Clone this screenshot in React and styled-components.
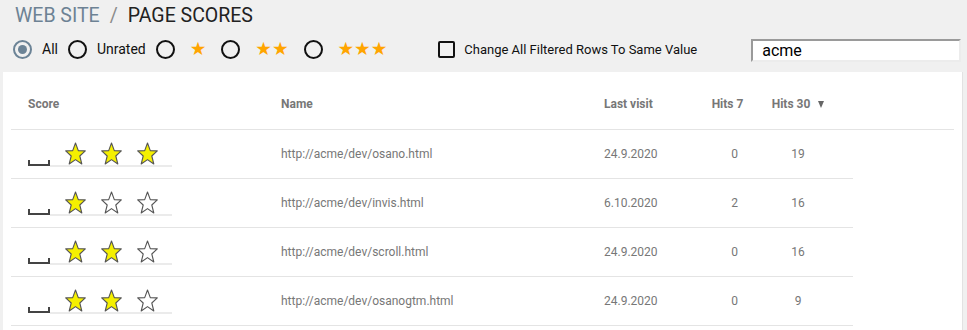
import React from 'react'
import styled, { createGlobalStyle } from 'styled-components'

const GlobalStyle = createGlobalStyle`
  html, body {
    margin: 0;
    padding: 0;
    background-color: #f0f0f0;
    font-family: Roboto, "Liberation Sans", Arial, sans-serif;
  }
`

const Page = styled.div`
  height: 100vh;
  display: flex;
  flex-direction: column;
  overflow: hidden;
`

const Title = styled.h1`
  margin: 4px 0 0 15px;
  font-size: 19.5px;
  line-height: 24px;
  font-weight: 400;
  color: #222;
`

const Crumb = styled.span`
  color: #6d8294;
`

const Slash = styled.span`
  color: #8a8a8a;
  margin: 0 10px;
`

const FilterBar = styled.div`
  display: flex;
  align-items: center;
  height: 26px;
  margin-top: 8px;
  padding-left: 13px;
  white-space: nowrap;
`

const RadioOption = styled.label`
  display: flex;
  align-items: center;
  flex-shrink: 0;
  gap: 10px;
  margin-right: 10px;
  font-size: 14px;
  color: #111;
`

const RadioCircle = styled.span`
  box-sizing: border-box;
  width: 19px;
  height: 19px;
  border-radius: 50%;
  border: 2px solid ${props => (props.$checked ? '#6b8396' : '#111')};
  display: flex;
  align-items: center;
  justify-content: center;
  &::after {
    content: '';
    width: 9px;
    height: 9px;
    border-radius: 50%;
    background-color: ${props => (props.$checked ? '#6b8396' : 'transparent')};
  }
`

const OrangeStars = styled.span`
  font-family: "DejaVu Sans", sans-serif;
  font-size: 18.5px;
  line-height: 20px;
  color: #ffa500;
  padding: 0 5px 0 5px;
`

const CheckOption = styled.label`
  display: flex;
  align-items: center;
  flex-shrink: 0;
  gap: 9px;
  margin-left: 36px;
  font-size: 13px;
  color: #111;
`

const CheckBox = styled.span`
  box-sizing: border-box;
  width: 17px;
  height: 17px;
  border: 2px solid #111;
  border-radius: 2px;
`

const SearchInput = styled.input`
  box-sizing: border-box;
  flex-shrink: 0;
  width: 210px;
  height: 23px;
  margin: 3px 0 0 54px;
  padding: 0 9px;
  border-style: solid;
  border-width: 2px;
  border-color: #9a9a9a #ececec #ececec #9a9a9a;
  background-color: #fff;
  font-family: Roboto, "Liberation Sans", Arial, sans-serif;
  font-size: 16px;
  color: #000;
  outline: none;
`

const Panel = styled.div`
  flex: 1;
  margin: 10px 0 0 3px;
  width: 960px;
  padding-left: 8px;
  box-sizing: border-box;
  background-color: #fff;
  border-right: 1px solid #e2e2e2;
`

const columns = '270px 323px 98px 65px 62px'

const HeaderRow = styled.div`
  display: grid;
  grid-template-columns: ${columns} 1fr;
  width: 943px;
  padding: 25px 0 18px;
  line-height: 14px;
  border-bottom: 1px solid #e4e4e4;
  font-size: 12px;
  font-weight: 700;
  color: #777;
`

const Row = styled.div`
  display: grid;
  grid-template-columns: ${columns} 1fr;
  align-items: center;
  width: 842px;
  height: 48px;
  border-bottom: 1px solid #e4e4e4;
  font-size: 12px;
  color: #777;
`

const Cell = styled.div`
  display: flex;
  align-items: center;
  justify-content: ${props => (props.$center ? 'center' : 'flex-start')};
  padding-left: ${props => (props.$first ? '17px' : '0')};
  white-space: nowrap;
`

const SortArrow = styled.span`
  width: 0;
  height: 0;
  margin: 1px 0 0 8px;
  border-left: 3.5px solid transparent;
  border-right: 3.5px solid transparent;
  border-top: 7px solid ${props => (props.$off ? 'transparent' : '#666')};
`

const Rating = styled.div`
  display: flex;
  align-items: flex-end;
  padding-left: 17px;
`

const ClearBox = styled.span`
  box-sizing: border-box;
  width: 22px;
  height: 6px;
  border: 2px solid #444;
  border-top: none;
  margin-bottom: 1px;
`

const StarTrack = styled.span`
  display: flex;
  align-items: flex-end;
  gap: 15px;
  padding: 0 14px 0 14.5px;
  border-bottom: 2px solid #ebebeb;
`

const StarIcon = ({ filled }) => (
  <svg width='21' height='23' viewBox='0 0 21 23'>
    <polygon
      points='10.5,1 13.3,8.6 20.3,8.9 14.8,14 16.8,22 10.5,17.6 4.2,22 6.2,14 0.7,8.9 7.7,8.6'
      fill={filled ? '#f5f000' : '#fff'}
      stroke='#555'
      strokeWidth='1.1'
      strokeLinejoin='round'
    />
  </svg>
)

const rows = [
  { score: 3, url: 'http://acme/dev/osano.html', visit: '24.9.2020', hits7: 0, hits30: 19 },
  { score: 1, url: 'http://acme/dev/invis.html', visit: '6.10.2020', hits7: 2, hits30: 16 },
  { score: 2, url: 'http://acme/dev/scroll.html', visit: '24.9.2020', hits7: 0, hits30: 16 },
  { score: 2, url: 'http://acme/dev/osanogtm.html', visit: '24.9.2020', hits7: 0, hits30: 9 }
]

const ScoreStars = ({ score }) => (
  <Rating>
    <ClearBox />
    <StarTrack>
      {[1, 2, 3].map(n => <StarIcon key={n} filled={n <= score} />)}
    </StarTrack>
  </Rating>
)

export default function App () {
  return (
    <Page>
      <GlobalStyle />
      <Title>
        <Crumb>WEB SITE</Crumb>
        <Slash>/</Slash>
        PAGE SCORES
      </Title>
      <FilterBar>
        <RadioOption><RadioCircle $checked />All</RadioOption>
        <RadioOption><RadioCircle />Unrated</RadioOption>
        <RadioOption><RadioCircle /><OrangeStars>★</OrangeStars></RadioOption>
        <RadioOption><RadioCircle /><OrangeStars>★★</OrangeStars></RadioOption>
        <RadioOption><RadioCircle /><OrangeStars>★★★</OrangeStars></RadioOption>
        <CheckOption><CheckBox />Change All Filtered Rows To Same Value</CheckOption>
        <SearchInput defaultValue='acme' />
      </FilterBar>
      <Panel>
        <HeaderRow>
          <Cell $first>Score</Cell>
          <Cell>Name</Cell>
          <Cell>Last visit</Cell>
          <Cell $center>Hits 7<SortArrow $off /></Cell>
          <Cell $center>Hits 30<SortArrow /></Cell>
        </HeaderRow>
        {rows.map(r => (
          <Row key={r.url}>
            <ScoreStars score={r.score} />
            <Cell>{r.url}</Cell>
            <Cell>{r.visit}</Cell>
            <Cell $center>{r.hits7}</Cell>
            <Cell $center>{r.hits30}</Cell>
          </Row>
        ))}
      </Panel>
    </Page>
  )
}
